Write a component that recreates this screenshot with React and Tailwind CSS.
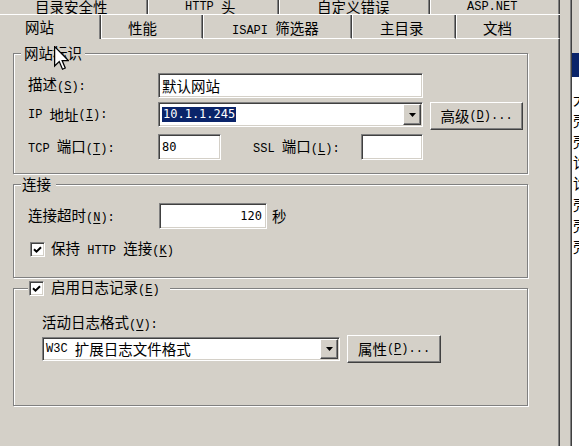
import React from 'react';

const sunken =
  'border border-t-[#808080] border-l-[#808080] border-r-white border-b-white shadow-[inset_1px_1px_0_#404040,inset_-1px_-1px_0_#d4d0c8]';
const raised =
  'border border-t-white border-l-white border-r-[#404040] border-b-[#404040] shadow-[inset_-1px_-1px_0_#808080]';
const etched = 'border border-[#808080] shadow-[inset_1px_1px_0_#fff,1px_1px_0_#fff]';

const CJK = /([\u2e80-\u9fff\uff00-\uffef]+)/;

// "&" marks the mnemonic letter, like a Windows resource string
function Txt({ t }) {
  return t
    .split(CJK)
    .filter(Boolean)
    .map((p, i) => {
      if (CJK.test(p)) return <span key={i}>{p}</span>;
      const [a, b] = p.split('&');
      return (
        <span key={i} className="font-['Liberation_Mono',monospace] text-[12px] whitespace-pre">
          {a}
          {b !== undefined && (
            <>
              <span className="underline underline-offset-2">{b[0]}</span>
              {b.slice(1)}
            </>
          )}
        </span>
      );
    });
}

function Check() {
  return (
    <span className={`${sunken} w-[15px] h-[15px] bg-white flex items-center justify-center shrink-0`}>
      <svg width="9" height="9" viewBox="0 0 9 9">
        <path d="M1 4.2 L3.5 6.7 L8 2.2" fill="none" stroke="#000" strokeWidth="2" />
      </svg>
    </span>
  );
}

function Combo({ className, children }) {
  return (
    <div className={`${sunken} bg-white flex p-[1px] ${className}`}>
      <div className="flex-1 flex items-center pl-[2px] overflow-hidden whitespace-nowrap">{children}</div>
      <div className={`${raised} w-[18px] bg-[#d4d0c8] flex items-center justify-center`}>
        <svg width="7" height="4" viewBox="0 0 7 4">
          <path d="M0 0h7L3.5 4z" fill="#000" />
        </svg>
      </div>
    </div>
  );
}

function Btn({ t, className }) {
  return (
    <div className={`${raised} bg-[#d4d0c8] flex items-center justify-center ${className}`}>
      <Txt t={t} />
    </div>
  );
}

const backTabs = [
  { t: '目录安全性', w: 'w-[148px]', pl: 'pl-[35px]' },
  { t: 'HTTP 头', w: 'w-[131px]', pl: 'pl-[36px]' },
  { t: '自定义错误', w: 'w-[151px]', pl: 'pl-[37px]' },
  { t: 'ASP.NET', w: 'w-[130px]', pl: 'pl-[36px]' },
];

const frontTabs = [
  { t: '网站', w: 'w-[101px]', pl: 'pl-[25px]', sel: true },
  { t: '性能', w: 'w-[102px]', pl: 'pl-[26px]' },
  { t: 'ISAPI 筛选器', w: 'w-[149px]', pl: 'pl-[28px]' },
  { t: '主目录', w: 'w-[104px]', pl: 'pl-[27px]' },
  { t: '文档', w: 'w-[104px]', pl: 'pl-[26px]' },
];

const listRows = ['大', '壳', '壳', '讫', '讫', '壳', '壳', '壳'];

export default function App() {
  return (
    <div className="relative w-[579px] h-[446px] overflow-hidden bg-[#d4d0c8] text-black text-[14.5px] leading-[16px] font-['Noto_Sans_CJK_SC',sans-serif] flex">
      <div className="w-[560px] flex flex-col">
        {/* back row of tabs */}
        <div className="h-[14px] flex overflow-hidden">
          {backTabs.map((b, i) => (
            <div
              key={b.t}
              className={`${b.w} ${b.pl} h-full flex items-center border-r border-r-[#404040] shadow-[inset_-1px_0_0_#808080] ${
                i > 0 ? 'border-l border-l-white' : ''
              }`}
            >
              <Txt t={b.t} />
            </div>
          ))}
        </div>

        {/* front row of tabs */}
        <div className="h-[25px] flex border-t border-white">
          {frontTabs.map((f, i) => (
            <div
              key={f.t}
              className={`${f.w} ${f.pl} h-full border-r border-r-[#404040] shadow-[inset_-1px_0_0_#808080] ${
                i > 0 ? 'border-l border-l-white' : ''
              } ${f.sel ? 'pt-[4px]' : 'pt-[5px] border-b border-b-white'}`}
            >
              <Txt t={f.t} />
            </div>
          ))}
        </div>

        {/* property page */}
        <div className="flex-1 flex flex-col pt-[6px] pl-[13px] border-r border-r-[#404040] shadow-[inset_-1px_0_0_#808080]">
          <fieldset className={`${etched} w-[515px] h-[129px]`}>
            <legend className="ml-[7px] px-[3px] bg-[#d4d0c8]">网站标识</legend>
            <div className="pl-[14px] pt-[12px] flex flex-col">
              <div className="flex items-center h-[25px]">
                <div className="w-[130px]">
                  <Txt t="描述(&S):" />
                </div>
                <div className={`${sunken} w-[265px] h-full bg-white flex items-center pl-[3px]`}>默认网站</div>
              </div>
              <div className="flex items-start mt-[4px] h-[28px]">
                <div className="w-[130px] h-[25px] flex items-center">
                  <Txt t="IP 地址(&I):" />
                </div>
                <Combo className="w-[265px] h-[25px]">
                  <span className="bg-[#0a246a] text-white font-['DejaVu_Sans_Mono',monospace] text-[12px] leading-[15px] px-[1px]">
                    10.1.1.245
                  </span>
                </Combo>
                <Btn t="高级(&D)..." className="ml-[7px] w-[93px] h-[28px]" />
              </div>
              <div className="flex items-center mt-[4px] h-[26px]">
                <div className="w-[130px]">
                  <Txt t="TCP 端口(&T):" />
                </div>
                <div className={`${sunken} w-[63px] h-full bg-white flex items-center pl-[3px] font-['DejaVu_Sans_Mono',monospace] text-[12px]`}>
                  80
                </div>
                <div className="ml-[32px] w-[108px]">
                  <Txt t="SSL 端口(&L):" />
                </div>
                <div className={`${sunken} w-[62px] h-full bg-white`} />
              </div>
            </div>
          </fieldset>

          <fieldset className={`${etched} w-[515px] h-[102px] mt-[2px]`}>
            <legend className="ml-[7px] pl-[1px] pr-[5px] bg-[#d4d0c8]">连接</legend>
            <div className="pl-[14px] pt-[11px] flex flex-col">
              <div className="flex items-center h-[26px]">
                <div className="w-[131px]">
                  <Txt t="连接超时(&N):" />
                </div>
                <div className={`${sunken} w-[108px] h-full bg-white flex items-center justify-end pr-[4px] font-['DejaVu_Sans_Mono',monospace] text-[12px]`}>
                  120
                </div>
                <span className="ml-[5px]">秒</span>
              </div>
              <div className="flex items-center h-[16px] mt-[12px] ml-[2px] gap-[6px]">
                <Check />
                <span>
                  <Txt t="保持 HTTP 连接(&K)" />
                </span>
              </div>
            </div>
          </fieldset>

          <fieldset className={`${etched} w-[515px] h-[126px] mt-[2px]`}>
            <legend className="ml-[14px] pl-[1px] pr-[10px] bg-[#d4d0c8]">
              <div className="flex items-center gap-[7px] h-[16px]">
                <Check />
                <span>
                  <Txt t="启用日志记录(&E)" />
                </span>
              </div>
            </legend>
            <div className="pl-[28px] pt-[18px] flex flex-col">
              <div>
                <Txt t="活动日志格式(&V):" />
              </div>
              <div className="flex items-center h-[28px] mt-[2px]">
                <Combo className="w-[298px] h-[24px]">
                  <Txt t="W3C 扩展日志文件格式" />
                </Combo>
                <Btn t="属性(&P)..." className="ml-[7px] w-[94px] h-[28px]" />
              </div>
            </div>
          </fieldset>
        </div>
      </div>

      <div className="w-[10px]" />
      <div className="w-[2px] border-l border-l-[#808080] bg-[#404040]" />

      {/* edge of the window behind */}
      <div className="flex-1 flex flex-col overflow-hidden">
        <div className="h-[53px] bg-[#d4d0c8]" />
        <div className="h-[24px] bg-[#0a246a]" />
        <div className="flex-1 bg-white pt-[11px] flex flex-col">
          {listRows.map((c, i) => (
            <div key={i} className="h-[21px] flex items-center whitespace-nowrap pl-[1px]">
              {c}
            </div>
          ))}
        </div>
      </div>

      {/* mouse pointer */}
      <svg className="absolute left-[54px] top-[46px]" width="15" height="25" viewBox="0 0 12 20">
        <path d="M0.5 0.5 L0.5 16 L4.2 12.4 L6.8 18.6 L9 17.6 L6.5 11.6 L11.5 11.6 Z" fill="#fff" stroke="#000" strokeWidth="1" />
      </svg>
    </div>
  );
}
